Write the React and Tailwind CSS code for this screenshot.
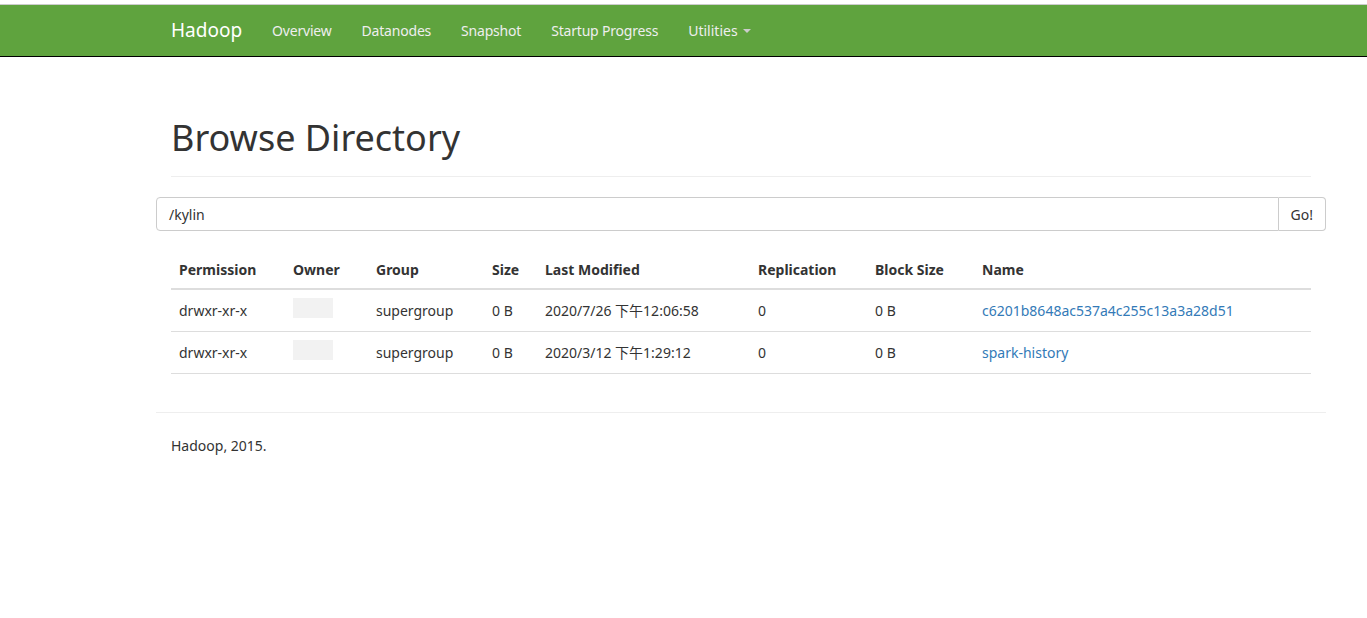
export default function App() {
  const cols = ['Permission', 'Owner', 'Group', 'Size', 'Last Modified', 'Replication', 'Block Size', 'Name']
  const widths = ['w-[114px]', 'w-[83px]', 'w-[116px]', 'w-[53px]', 'w-[213px]', 'w-[117px]', 'w-[107px]', '']
  const rows = [
    ['drwxr-xr-x', '', 'supergroup', '0 B', '2020/7/26 下午12:06:58', '0', '0 B', 'c6201b8648ac537a4c255c13a3a28d51'],
    ['drwxr-xr-x', '', 'supergroup', '0 B', '2020/3/12 下午1:29:12', '0', '0 B', 'spark-history'],
  ]
  return (
    <div className="min-h-[618px] bg-white text-[14px] text-[#333]" style={{ fontFamily: '"Noto Sans", "Noto Sans CJK SC", sans-serif' }}>
      <div className="h-[5px] bg-white border-b border-[#ccc]" />
      <nav className="h-[52px] bg-[#5fa33e] border-b border-black">
        <div className="ml-[156px] w-[1170px] px-[15px] flex items-center h-full">
          <span className="text-white text-[19px] mr-[30px]">Hadoop</span>
          {['Overview', 'Datanodes', 'Snapshot', 'Startup Progress'].map(t => (
            <span key={t} className="text-[#eee] mr-[30px] tracking-[-0.2px]">{t}</span>
          ))}
          <span className="text-[#eee] flex items-center">Utilities
            <span className="ml-[5px] w-0 h-0 border-x-[4px] border-x-transparent border-t-[4px] border-t-[#ccc]" />
          </span>
        </div>
      </nav>
      <div className="ml-[156px] w-[1170px]">
        <div className="px-[15px]">
          <h1 className="text-[36px] text-[#333] mt-[58px] pb-[16px] border-b border-[#eee] leading-tight">Browse Directory</h1>
        </div>
        <div className="flex mt-[20px] h-[34px]">
          <div className="flex-1 border border-[#ccc] rounded-l-[4px] px-[12px] flex items-center">/kylin</div>
          <div className="border border-l-0 border-[#ccc] rounded-r-[4px] px-[12px] flex items-center">Go!</div>
        </div>
        <div className="px-[15px] mt-[20px]">
          <table className="w-full text-left border-collapse">
            <thead>
              <tr className="border-b-2 border-[#ddd]">
                {cols.map((c, i) => <th key={c} className={`px-[8px] py-[8px] font-bold ${widths[i]}`}>{c}</th>)}
              </tr>
            </thead>
            <tbody>
              {rows.map((r, ri) => (
                <tr key={ri} className="border-b border-[#ddd]">
                  {r.map((v, i) => (
                    <td key={i} className={`px-[8px] py-[8px] ${i === 7 ? 'text-[#337ab7]' : ''}`}>
                      {i === 1 ? <span className="inline-block w-[40px] h-[20px] bg-[#f2f2f2]" /> : v}
                    </td>
                  ))}
                </tr>
              ))}
            </tbody>
          </table>
        </div>
        <div className="mt-[38px] border-t border-[#eee] px-[15px] pt-[22px]">Hadoop, 2015.</div>
      </div>
    </div>
  )
}
